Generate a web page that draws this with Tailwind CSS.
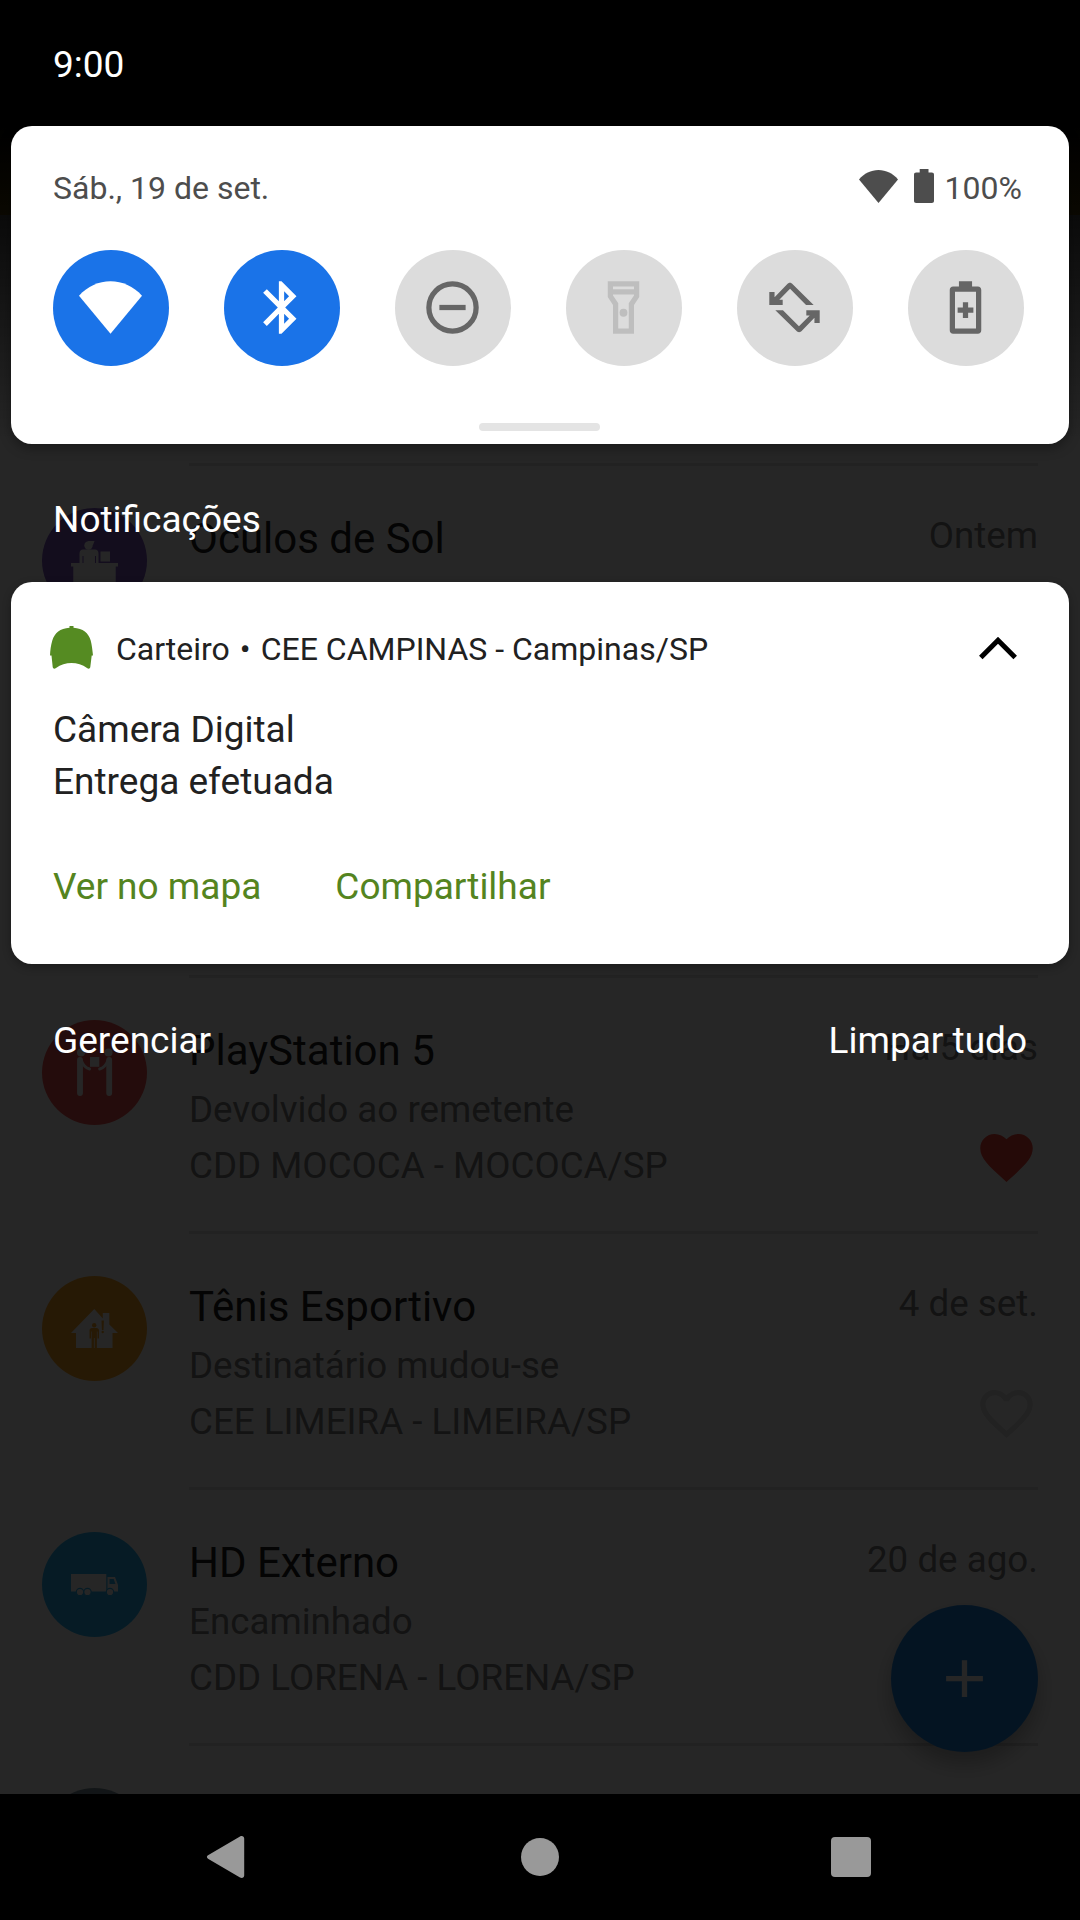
<!DOCTYPE html>
<html lang="pt-BR">
<head>
<meta charset="utf-8">
<meta name="viewport" content="width=device-width, initial-scale=1">
<title>Notificações</title>
<script src="https://cdn.jsdelivr.net/npm/@tailwindcss/browser@4"></script>
</head>
<body class="bg-black font-['Roboto',sans-serif]">
<div class="relative w-[1080px] h-[1920px] overflow-hidden bg-black">

  <!-- App behind the shade -->
  <div class="h-[1794px] overflow-hidden bg-white flex flex-col text-[36.75px] leading-[43px] text-[#7f7f7f]">
    <div class="h-[215px] shrink-0 bg-[#ffca28]"></div>
    <div class="h-[251px] shrink-0 pl-[189px] pr-[42px] flex flex-col justify-end"><div class="h-[3px] bg-[#e0e0e0]"></div></div>

    <div class="h-[256px] shrink-0 flex pl-[42px] pr-[42px]">
      <div class="mt-[42px] size-[105px] shrink-0 rounded-full bg-[#7e57c2]">
        <svg class="size-[105px]" viewBox="0 0 105 105" fill="#fff"><circle cx="46.5" cy="37.5" r="4.2"/><path d="M46 33h6.500l-1.500 4h-3z"/><path d="M41 41.500h12c2 0 3.500 1.500 3.500 4v9.500h-2.500v-7h-1v7H41.500v-7h-1v7H37.500v-9.500c0-2.500 1.500-4 3.500-4z"/><path d="M58.500 43.500h9.500v10h-9.500zM29 55h47v3.500h-2.300v17h-42.400v-17H29z"/></svg>
      </div>
      <div class="ml-[42px] grow border-b-3 border-[#e0e0e0] flex justify-between">
        <div class="flex flex-col pt-[45px]"><span class="text-[42px] leading-[56px] text-[#202020]">Óculos de Sol</span></div>
        <span class="pt-[48px]">Ontem</span>
      </div>
    </div>

    <div class="h-[256px] shrink-0 pl-[189px] pr-[42px] flex flex-col justify-end"><div class="h-[3px] bg-[#e0e0e0]"></div></div>

    <div class="h-[256px] shrink-0 flex pl-[42px] pr-[42px]">
      <div class="mt-[42px] size-[105px] shrink-0 rounded-full bg-[#ef5350]">
        <svg class="size-[105px]" viewBox="0 0 105 105" fill="#fff"><circle cx="39" cy="32.500" r="4"/><circle cx="66.500" cy="32.500" r="4"/><path d="M48 37h9.300v9.800H48z"/><path d="M38 40v33M67.200 40v33" fill="none" stroke="#fff" stroke-width="5.800" stroke-linecap="round"/><path d="M39 40c2 5 4 8 8.500 9M66.200 40c-2 5-4 8-8.500 9" fill="none" stroke="#fff" stroke-width="3" stroke-linecap="round"/></svg>
      </div>
      <div class="ml-[42px] grow border-b-3 border-[#e0e0e0] flex justify-between">
        <div class="flex flex-col pt-[45px]"><span class="text-[42px] leading-[56px] text-[#202020]">PlayStation 5</span><span class="mt-[3px] leading-[56px]">Devolvido ao remetente</span><span class="leading-[56px]">CDD MOCOCA - MOCOCA/SP</span></div>
        <div class="flex flex-col items-end pt-[48px]"><span>Há 5 dias</span>
          <svg class="mt-[57px] size-[63px]" viewBox="0 0 24 24" fill="#f44336"><path d="M12 21.350l-1.450-1.320C5.400 15.360 2 12.280 2 8.500 2 5.420 4.420 3 7.500 3c1.740 0 3.410.81 4.500 2.090C13.090 3.810 14.760 3 16.500 3 19.580 3 22 5.420 22 8.500c0 3.780-3.400 6.860-8.550 11.540L12 21.350z"/></svg></div>
      </div>
    </div>

    <div class="h-[256px] shrink-0 flex pl-[42px] pr-[42px]">
      <div class="mt-[42px] size-[105px] shrink-0 rounded-full bg-[#ffa726]">
        <svg class="size-[105px]" viewBox="0 0 105 105"><path fill="#fff" d="M52.300 33l8.500 9.500V37h6.500v11.500L76 57h-5.500v15H34V57h-5z"/><g fill="#ffa726"><circle cx="52.200" cy="49.300" r="2.200"/><path d="M50 52h4.500c1.500 0 2.500 1 2.500 2.500v8h-1.500v-7h-.6V72h-2.200V62h-.8v10h-2.300V55.500H49v7h-1.500v-8c0-1.500 1-2.500 2.500-2.500zM59.500 44.500h2.400l-.4 9.500h-1.600z"/><circle cx="60.700" cy="56" r="1.200"/></g></svg>
      </div>
      <div class="ml-[42px] grow border-b-3 border-[#e0e0e0] flex justify-between">
        <div class="flex flex-col pt-[45px]"><span class="text-[42px] leading-[56px] text-[#202020]">Tênis Esportivo</span><span class="mt-[3px] leading-[56px]">Destinatário mudou-se</span><span class="leading-[56px]">CEE LIMEIRA - LIMEIRA/SP</span></div>
        <div class="flex flex-col items-end pt-[48px]"><span>4 de set.</span>
          <svg class="mt-[57px] size-[63px]" viewBox="0 0 24 24" fill="#e0e0e0"><path d="M16.500 3c-1.740 0-3.410.81-4.500 2.090C10.910 3.810 9.240 3 7.500 3 4.420 3 2 5.420 2 8.500c0 3.780 3.400 6.860 8.550 11.540L12 21.350l1.450-1.320C18.600 15.360 22 12.280 22 8.500 22 5.420 19.580 3 16.500 3zm-4.400 15.550l-.1.100-.1-.1C7.140 14.240 4 11.390 4 8.500 4 6.500 5.500 5 7.500 5c1.540 0 3.040.99 3.570 2.360h1.870C13.460 5.990 14.960 5 16.500 5c2 0 3.500 1.500 3.500 3.500 0 2.890-3.140 5.740-7.900 10.050z"/></svg></div>
      </div>
    </div>

    <div class="h-[256px] shrink-0 flex pl-[42px] pr-[42px]">
      <div class="mt-[42px] size-[105px] shrink-0 rounded-full bg-[#29b6f6]">
        <svg class="size-[105px]" viewBox="0 0 105 105" fill="#fff"><path d="M29 42h35.300v17.500H29z"/><path fill-rule="evenodd" d="M65.500 45h7.500l3 8v6.500H65.500zM67.500 47v5h6l-1.800-5z"/><g stroke="#29b6f6" stroke-width="1.200"><circle cx="38" cy="60" r="3.700"/><circle cx="45.500" cy="60" r="3.700"/><circle cx="68" cy="60" r="3.700"/></g></svg>
      </div>
      <div class="ml-[42px] grow border-b-3 border-[#e0e0e0] flex justify-between">
        <div class="flex flex-col pt-[45px]"><span class="text-[42px] leading-[56px] text-[#202020]">HD Externo</span><span class="mt-[3px] leading-[56px]">Encaminhado</span><span class="leading-[56px]">CDD LORENA - LORENA/SP</span></div>
        <span class="pt-[48px]">20 de ago.</span>
      </div>
    </div>

    <div class="h-[256px] shrink-0 flex pl-[42px]"><div class="mt-[42px] size-[105px] rounded-full bg-[#78909c]"></div></div>
  </div>

  <!-- Floating action button -->
  <div class="absolute left-[891px] top-[1605px] size-[147px] rounded-full bg-[#1e88e5] shadow-[0_12px_22px_rgba(0,0,0,0.28)] flex items-center justify-center">
    <svg class="size-[63px]" viewBox="0 0 24 24" fill="#fff"><path d="M19 13h-6v6h-2v-6H5v-2h6V5h2v6h6v2z"/></svg>
  </div>

  <!-- Scrim -->
  <div class="absolute inset-x-0 top-0 h-[1794px] bg-black/85"></div>
  <div class="absolute inset-x-0 top-0 h-[440px] bg-linear-to-b from-black from-[126px] to-transparent"></div>

  <!-- Notification shade -->
  <div class="absolute inset-x-0 top-0 h-[1920px] flex flex-col text-[37px] leading-[43px] text-white">
    <header class="h-[126px] shrink-0 pl-[53px] pt-[43px]"><span>9:00</span></header>

    <section class="mx-[11px] h-[318px] shrink-0 rounded-[21px] bg-white shadow-[0_4px_12px_rgba(0,0,0,0.35)] text-[#4d4d4d] flex flex-col">
      <div class="h-[124px] pl-[42px] pr-[47px] pt-[43px] flex items-start justify-between text-[32px] leading-[38px]">
        <span>Sáb., 19 de set.</span>
        <div class="flex items-start">
          <svg class="w-[39px] h-[34px] mr-[16px]" viewBox="0 0 39 34" fill="#4d4d4d"><path d="M0 10.500C5 4.500 12 1 19.500 1S34 4.500 39 10.500L19.500 34z"/></svg>
          <svg class="w-[20px] h-[34px] mr-[11px]" viewBox="0 0 20 34" fill="#4d4d4d"><path d="M5.700 0h8.800v3.500h3.300c1.400 0 2.200.9 2.200 2.200v26.100c0 1.400-.8 2.200-2.200 2.200H2.200C.8 34 0 33.200 0 31.800V5.700c0-1.300.8-2.200 2.200-2.200h3.500z"/></svg>
          <span>100%</span>
        </div>
      </div>
      <div class="flex justify-between pl-[42px] pr-[45px]">
        <div class="size-[116px] pr-px pb-px rounded-full bg-[#1a73e8] flex items-center justify-center"><svg class="size-[63px]" viewBox="0 0 24 24" fill="#fff"><path d="M0 7.500C3.300 3.900 7.500 2 12 2s8.700 1.900 12 5.500L12 22z"/></svg></div>
        <div class="size-[116px] pr-px pb-px rounded-full bg-[#1a73e8] flex items-center justify-center"><svg class="size-[63px]" viewBox="0 0 24 24" fill="#fff"><path d="M17.710 7.710L12 2h-1v7.590L6.410 5 5 6.410 10.590 12 5 17.590 6.410 19 11 14.410V22h1l5.710-5.710-4.300-4.290 4.300-4.290zM13 5.830l1.880 1.880L13 9.590V5.830zm1.880 10.460L13 18.170v-3.760l1.880 1.880z"/></svg></div>
        <div class="size-[116px] pr-px pb-px rounded-full bg-[#dcdcdc] flex items-center justify-center"><svg class="size-[63px]" viewBox="0 0 24 24" fill="none" stroke="#666" stroke-width="2"><circle cx="12" cy="12" r="9"/><path d="M7 12h10"/></svg></div>
        <div class="size-[116px] pr-px pb-px rounded-full bg-[#dcdcdc] flex items-center justify-center"><svg class="size-[63px]" viewBox="0 0 24 24" fill="#bebebe"><path fill-rule="evenodd" d="M6 2h12v6l-2 3v11H8V11L6 8zM8 4v1h8V4zM8 7v.390l2 3V20h4v-9.600l2-3V7z"/><circle cx="12" cy="14" r="1.500"/></svg></div>
        <div class="size-[116px] pr-px pb-px rounded-full bg-[#dcdcdc] flex items-center justify-center"><svg class="size-[63px]" viewBox="0 0 24 24" fill="#666"><path d="M2.400 6.100h2v2l4.700-4.900c.7-.8 1.600-.8 2.300 0L19.300 11h-2.900L10.300 4.900 6.200 9h1.300v2H2.400z"/><path d="M21.600 17.900h-2v-2l-4.700 4.900c-.7.8-1.600.8-2.300 0L4.700 13h2.900l6.100 6.100 4.100-4.100h-1.300v-2h5.100z"/></svg></div>
        <div class="size-[116px] pr-px pb-px rounded-full bg-[#dcdcdc] flex items-center justify-center"><svg class="size-[63px]" viewBox="0 0 24 24" fill="#666"><path fill-rule="evenodd" d="M9.500 2h5v2h2.200c.8 0 1.300.5 1.300 1.300v15.400c0 .8-.5 1.300-1.300 1.300H7.300C6.500 22 6 21.500 6 20.700V5.300C6 4.500 6.500 4 7.300 4h2.200zM8 6v14h8V6z"/><path d="M11 10h2v2h2v2h-2v2h-2v-2H9v-2h2z"/></svg></div>
      </div>
      <div class="mt-[57px] ml-[468px] w-[121px] h-[8px] rounded-full bg-[#e4e4e4]"></div>
    </section>

    <h2 class="h-[138px] shrink-0 pl-[42px] ml-[11px] pt-[54px] font-normal">Notificações</h2>

    <section class="mx-[11px] h-[382px] shrink-0 rounded-[21px] bg-white shadow-[0_3px_8px_rgba(0,0,0,0.3)] text-[#212121] px-[42px] flex flex-col">
      <div class="mt-[44px] -ml-[3px] h-[43px] flex items-center text-[32px] leading-[38px]">
        <svg class="w-[43px] h-[43px]" viewBox="0 0 43 43" fill="#558b22"><path d="M19.500 0h4v1.800C33 2.400 38.500 7 40.700 14.500c1.200 4.500 1.700 9 2.300 15h-1.300L40.300 41c-.3 1.700-1.800 2.200-3.300 1C28 35.200 15 35.200 6 42c-1.500 1.200-3 .7-3.300-1L1.500 29.500H0C.3 24 .8 19.500 2.300 14.500 4.700 7 10 2.400 19.500 1.800z"/></svg>
        <span class="ml-[23px] mt-[2px]">Carteiro</span><span class="mx-[10px] mt-[2px]">•</span><span class="mt-[2px]">CEE CAMPINAS - Campinas/SP</span>
        <svg class="ml-auto mr-[10px] w-[38px] h-[24px]" viewBox="0 0 38 24" fill="none" stroke="#000" stroke-width="5"><path d="M1.800 21.500L19 4.300l17.200 17.200"/></svg>
      </div>
      <p class="mt-[35px] leading-[52px]">Câmera Digital</p>
      <p class="leading-[52px]">Entrega efetuada</p>
      <div class="mt-[57px] flex gap-[74px] text-[#548420]"><span>Ver no mapa</span><span>Compartilhar</span></div>
    </section>

    <div class="flex justify-between pl-[53px] pr-[53px] pt-[55px]"><span>Gerenciar</span><span>Limpar tudo</span></div>
  </div>

  <!-- Navigation bar -->
  <nav class="absolute inset-x-0 bottom-0 h-[126px] bg-black flex items-center justify-between pl-[206px] pr-[209px]">
    <svg class="w-[39px] h-[44px]" viewBox="0 0 39 44" fill="#999"><path d="M2 20.300L34 1.400c2-1.100 4.200-.2 4.200 2v37.200c0 2.200-2.200 3.100-4.200 2L2 23.700c-1.500-.9-1.500-2.500 0-3.400z"/></svg>
    <div class="ml-[4px] size-[38px] rounded-full bg-[#999]"></div>
    <div class="size-[40px] rounded-[4px] bg-[#999]"></div>
  </nav>
</div>
</body>
</html>
